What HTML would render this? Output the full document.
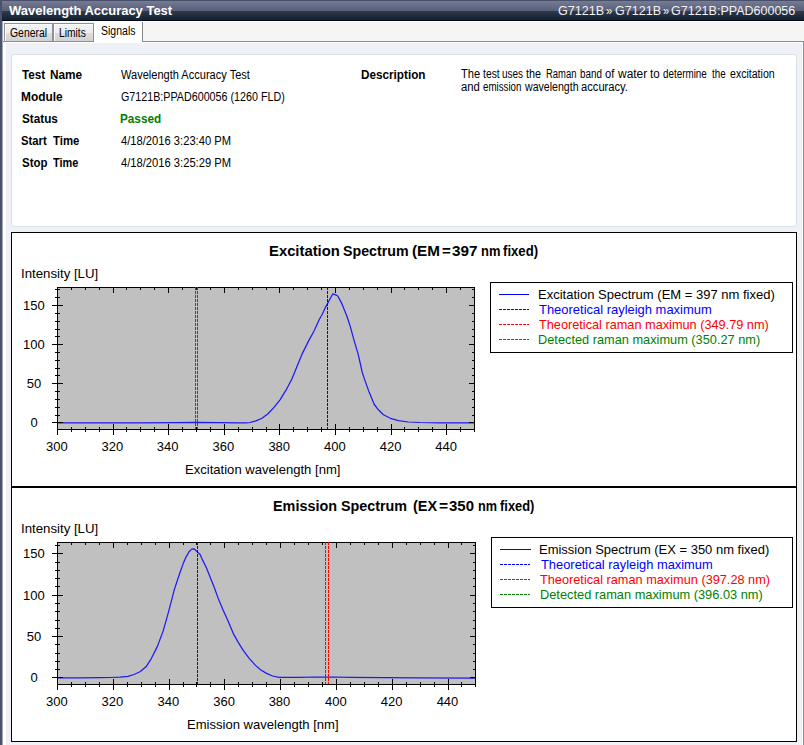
<!DOCTYPE html>
<html lang="en">
<head>
<meta charset="utf-8">
<title>Wavelength Accuracy Test</title>
<style>
html,body{margin:0;padding:0;}
body{width:804px;height:745px;position:relative;overflow:hidden;background:#fff;font-family:"Liberation Sans",sans-serif;font-size:11px;color:#000;}
.t{position:absolute;white-space:nowrap;display:inline-block;transform-origin:0 0;}
.hdr{position:absolute;left:0;top:0;width:804px;height:21px;background:linear-gradient(to bottom,#475068 0,#475068 1px,#757b93 1px,#595e79 11px,#2f3a4c 11px,#14202f 20px,#020c1a 20px,#020c1a 21px);}
.lb{position:absolute;left:0;top:0;width:2px;height:745px;background:#4a516b;}
.lb2{position:absolute;left:2px;top:21px;width:1px;height:724px;background:#a6a9b6;}
.strip{position:absolute;left:2px;top:22px;width:802px;height:19px;background:#f5f5f5;}
.page{position:absolute;left:2px;top:41px;width:800px;height:710px;border:1px solid #8b8d99;border-left-color:#fff;background:#f0f1f6;box-shadow:inset 0 0 0 1px #fff, inset 2px 0 0 1px #fff;}
.tab{position:absolute;top:23px;height:18px;border:1px solid #8e909b;border-bottom:none;background:linear-gradient(to bottom,#f3f3f3 0,#ececec 9px,#dedede 9px,#d2d2d2 17px);box-shadow:inset 1px 1px 0 #fbfbfb;box-sizing:border-box;}
.tabsel{position:absolute;left:94px;top:21px;width:49px;height:21px;background:#fff;}
.tabsel:after{content:'';position:absolute;right:0;top:1px;width:1px;height:20px;background:#85878f;}
.info{position:absolute;left:11px;top:54px;width:786px;height:173px;box-sizing:border-box;border:1px solid #d7e0e8;border-radius:3px;background:#fff;}
.chart{position:absolute;left:11px;width:786px;height:255px;box-sizing:border-box;border:1px solid #000;background:#fff;}
.plot{position:absolute;left:0;top:0;display:block;}
</style>
</head>
<body>
<div class="hdr"></div>
<div class="strip"></div>
<div class="page"></div>
<div class="tab" style="left:4px;width:49px;"></div>
<div class="tab" style="left:53px;width:41px;"></div>
<div class="tabsel"></div>
<div class="lb"></div><div class="lb2"></div>
<div class="info"></div>
<div class="chart" style="top:232px;"><svg class="plot" width="784" height="253" viewBox="12 233 784 253">
<rect x="57" y="287" width="418" height="143" fill="#c0c0c0"/>
<polyline points="57.0,422.9 140.0,422.9 175.0,422.7 196.0,422.4 220.0,422.6 238.0,422.8 246.0,422.8 250.0,422.5 256.0,420.9 262.0,418.2 268.0,413.8 274.0,407.4 280.0,399.8 286.0,390.2 292.0,378.8 297.3,365.7 302.3,353.6 308.4,341.4 314.4,330.3 319.4,319.3 322.4,314.0 325.5,307.2 327.5,303.6 330.5,298.0 332.9,293.8 335.2,294.6 337.8,296.0 341.8,303.6 346.9,316.2 350.2,326.2 353.2,337.3 358.2,354.4 362.3,372.5 364.3,378.6 369.3,392.6 374.3,404.5 378.4,409.8 383.4,414.8 390.4,418.3 398.5,420.6 408.5,422.0 420.0,422.5 440.0,422.8 474.0,422.9" fill="none" stroke="#1c1cf2" stroke-width="1.25" stroke-linejoin="round"/>
<g shape-rendering="crispEdges">
<path d="M57 287.5H475M57 429.5H475M57.5 287V430M474.5 287V432M57.5 424V435M57.5 287V293M71.5 427V432M71.5 287V290M85.5 427V432M85.5 287V290M99.5 427V432M99.5 287V290M113.5 424V435M113.5 287V293M126.5 427V432M126.5 287V290M140.5 427V432M140.5 287V290M154.5 427V432M154.5 287V290M168.5 424V435M168.5 287V293M182.5 427V432M182.5 287V290M196.5 427V432M196.5 287V290M210.5 427V432M210.5 287V290M224.5 424V435M224.5 287V293M238.5 427V432M238.5 287V290M252.5 427V432M252.5 287V290M266.5 427V432M266.5 287V290M279.5 424V435M279.5 287V293M293.5 427V432M293.5 287V290M307.5 427V432M307.5 287V290M321.5 427V432M321.5 287V290M335.5 424V435M335.5 287V293M349.5 427V432M349.5 287V290M363.5 427V432M363.5 287V290M377.5 427V432M377.5 287V290M391.5 424V435M391.5 287V293M404.5 427V432M404.5 287V290M418.5 427V432M418.5 287V290M432.5 427V432M432.5 287V290M446.5 424V435M446.5 287V293M460.5 427V432M460.5 287V290M52 422.5H63M469 422.5H475M55 415.5H60M472 415.5H475M55 407.5H60M472 407.5H475M55 399.5H60M472 399.5H475M55 391.5H60M472 391.5H475M52 383.5H63M469 383.5H475M55 375.5H60M472 375.5H475M55 368.5H60M472 368.5H475M55 360.5H60M472 360.5H475M55 352.5H60M472 352.5H475M52 344.5H63M469 344.5H475M55 336.5H60M472 336.5H475M55 329.5H60M472 329.5H475M55 321.5H60M472 321.5H475M55 313.5H60M472 313.5H475M52 305.5H63M469 305.5H475M55 297.5H60M472 297.5H475M55 289.5H60M472 289.5H475" stroke="#000" stroke-width="1" fill="none"/>
<line x1="327.5" y1="287" x2="327.5" y2="429" stroke="#0000ff" stroke-width="1" stroke-dasharray="3 1"/>
<line x1="195.5" y1="287" x2="195.5" y2="429" stroke="#ff0000" stroke-width="1" stroke-dasharray="3 1"/>
<line x1="197.5" y1="287" x2="197.5" y2="429" stroke="#008000" stroke-width="1" stroke-dasharray="3 1"/>
<rect x="490.5" y="282.5" width="302" height="70" fill="#fff" stroke="#000"/>
<line x1="499" y1="294.5" x2="529" y2="294.5" stroke="#0000ff"/>
<line x1="499" y1="309.5" x2="529" y2="309.5" stroke="#0000ff" stroke-dasharray="3 1"/>
<line x1="499" y1="324.5" x2="529" y2="324.5" stroke="#ff0000" stroke-dasharray="3 1"/>
<line x1="499" y1="339.5" x2="529" y2="339.5" stroke="#008000" stroke-dasharray="3 1"/>
</g>
</svg></div>
<div class="chart" style="top:487px;"><svg class="plot" width="784" height="253" viewBox="12 488 784 253">
<rect x="57" y="542" width="419" height="143" fill="#c0c0c0"/>
<polyline points="57.0,677.9 80.0,677.8 100.0,677.6 110.0,677.5 120.0,677.2 128.0,676.3 134.0,674.5 140.0,671.8 146.0,666.8 151.2,658.8 157.3,646.6 163.3,630.6 168.4,612.4 174.4,589.4 179.4,574.3 183.2,563.6 186.0,557.1 189.1,551.7 191.7,549.1 194.3,548.9 197.1,551.7 200.1,554.5 202.1,559.1 206.2,567.2 210.2,577.2 214.2,587.3 218.2,598.4 223.3,610.4 228.3,621.5 233.3,633.6 238.4,642.6 243.4,650.7 249.4,658.7 255.5,665.4 260.5,669.8 266.5,673.4 272.6,676.0 279.0,677.3 300.0,677.4 315.0,677.0 335.0,677.0 350.0,677.4 385.0,677.7 420.0,677.9 475.0,678.1" fill="none" stroke="#1c1cf2" stroke-width="1.25" stroke-linejoin="round"/>
<g shape-rendering="crispEdges">
<path d="M57 542.5H476M57 684.5H476M57.5 542V685M475.5 542V687M57.5 679V690M57.5 542V548M71.5 682V687M71.5 542V545M85.5 682V687M85.5 542V545M99.5 682V687M99.5 542V545M113.5 679V690M113.5 542V548M127.5 682V687M127.5 542V545M141.5 682V687M141.5 542V545M155.5 682V687M155.5 542V545M169.5 679V690M169.5 542V548M183.5 682V687M183.5 542V545M196.5 682V687M196.5 542V545M210.5 682V687M210.5 542V545M224.5 679V690M224.5 542V548M238.5 682V687M238.5 542V545M252.5 682V687M252.5 542V545M266.5 682V687M266.5 542V545M280.5 679V690M280.5 542V548M294.5 682V687M294.5 542V545M308.5 682V687M308.5 542V545M322.5 682V687M322.5 542V545M336.5 679V690M336.5 542V548M350.5 682V687M350.5 542V545M364.5 682V687M364.5 542V545M378.5 682V687M378.5 542V545M392.5 679V690M392.5 542V548M406.5 682V687M406.5 542V545M420.5 682V687M420.5 542V545M434.5 682V687M434.5 542V545M448.5 679V690M448.5 542V548M461.5 682V687M461.5 542V545M52 677.5H63M470 677.5H476M55 669.5H60M473 669.5H476M55 661.5H60M473 661.5H476M55 653.5H60M473 653.5H476M55 644.5H60M473 644.5H476M52 636.5H63M470 636.5H476M55 628.5H60M473 628.5H476M55 620.5H60M473 620.5H476M55 611.5H60M473 611.5H476M55 603.5H60M473 603.5H476M52 595.5H63M470 595.5H476M55 586.5H60M473 586.5H476M55 578.5H60M473 578.5H476M55 570.5H60M473 570.5H476M55 562.5H60M473 562.5H476M52 553.5H63M470 553.5H476M55 545.5H60M473 545.5H476" stroke="#000" stroke-width="1" fill="none"/>
<line x1="197.5" y1="542" x2="197.5" y2="684" stroke="#0000ff" stroke-width="1" stroke-dasharray="3 1"/>
<line x1="328.5" y1="542" x2="328.5" y2="684" stroke="#ff0000" stroke-width="1" stroke-dasharray="3 1"/>
<line x1="325.5" y1="542" x2="325.5" y2="684" stroke="#008000" stroke-width="1" stroke-dasharray="3 1"/>
<rect x="491.5" y="537.5" width="301" height="70" fill="#fff" stroke="#000"/>
<line x1="500" y1="549.5" x2="531" y2="549.5" stroke="#0000ff"/>
<line x1="500" y1="564.5" x2="530" y2="564.5" stroke="#0000ff" stroke-dasharray="3 1"/>
<line x1="500" y1="579.5" x2="530" y2="579.5" stroke="#ff0000" stroke-dasharray="3 1"/>
<line x1="500" y1="594.5" x2="530" y2="594.5" stroke="#008000" stroke-dasharray="3 1"/>
</g>
</svg></div>
<span class="t" id="ttl" style="left:9.00px;top:4.00px;font-size:13px;line-height:13px;font-weight:bold;color:#ffffff;transform:scaleX(0.9977);">Wavelength Accuracy Test</span>
<span class="t" id="crumb0" style="left:557.65px;top:5.00px;font-size:12px;line-height:12px;color:#f2f2f2;transform:scaleX(1.0480);">G7121B</span>
<span class="t" id="crumb1" style="left:606.13px;top:5.00px;font-size:12px;line-height:12px;color:#f2f2f2;transform:scaleX(0.9422);">»</span>
<span class="t" id="crumb2" style="left:615.20px;top:5.00px;font-size:12px;line-height:12px;color:#f2f2f2;transform:scaleX(1.0456);">G7121B</span>
<span class="t" id="crumb3" style="left:662.84px;top:5.00px;font-size:12px;line-height:12px;color:#f2f2f2;transform:scaleX(0.9244);">»</span>
<span class="t" id="crumb4" style="left:671.05px;top:5.00px;font-size:12px;line-height:12px;color:#f2f2f2;transform:scaleX(1.0424);">G7121B:PPAD600056</span>
<span class="t" id="tab1" style="left:10.06px;top:27.00px;font-size:12px;line-height:12px;transform:scaleX(0.8679);">General</span>
<span class="t" id="tab2" style="left:58.75px;top:27.00px;font-size:12px;line-height:12px;transform:scaleX(0.8536);">Limits</span>
<span class="t" id="tab3" style="left:100.65px;top:25.00px;font-size:12px;line-height:12px;transform:scaleX(0.8758);">Signals</span>
<span class="t" id="lab0_0" style="left:21.88px;top:69.00px;font-size:12px;line-height:12px;font-weight:bold;transform:scaleX(0.9745);">Test</span>
<span class="t" id="lab0_1" style="left:50.06px;top:69.00px;font-size:12px;line-height:12px;font-weight:bold;transform:scaleX(0.9841);">Name</span>
<span class="t" id="val0" style="left:120.88px;top:69.00px;font-size:12px;line-height:12px;transform:scaleX(0.9201);">Wavelength Accuracy Test</span>
<span class="t" id="lab1" style="left:21.26px;top:91.00px;font-size:12px;line-height:12px;font-weight:bold;transform:scaleX(0.9908);">Module</span>
<span class="t" id="val1" style="left:121.19px;top:91.00px;font-size:12px;line-height:12px;transform:scaleX(0.8935);">G7121B:PPAD600056 (1260 FLD)</span>
<span class="t" id="lab2" style="left:21.63px;top:113.00px;font-size:12px;line-height:12px;font-weight:bold;transform:scaleX(0.9790);">Status</span>
<span class="t" id="val2" style="left:120.07px;top:113.00px;font-size:12px;line-height:12px;font-weight:bold;color:#008000;transform:scaleX(0.9778);">Passed</span>
<span class="t" id="lab3_0" style="left:21.35px;top:135.00px;font-size:12px;line-height:12px;font-weight:bold;transform:scaleX(0.9377);">Start</span>
<span class="t" id="lab3_1" style="left:52.88px;top:135.00px;font-size:12px;line-height:12px;font-weight:bold;transform:scaleX(0.9468);">Time</span>
<span class="t" id="val3" style="left:120.82px;top:135.00px;font-size:12px;line-height:12px;transform:scaleX(0.9318);">4/18/2016 3:23:40 PM</span>
<span class="t" id="lab4_0" style="left:21.84px;top:157.00px;font-size:12px;line-height:12px;font-weight:bold;transform:scaleX(0.9553);">Stop</span>
<span class="t" id="lab4_1" style="left:52.89px;top:157.00px;font-size:12px;line-height:12px;font-weight:bold;transform:scaleX(0.9101);">Time</span>
<span class="t" id="val4" style="left:120.82px;top:157.00px;font-size:12px;line-height:12px;transform:scaleX(0.9318);">4/18/2016 3:25:29 PM</span>
<span class="t" id="dlab" style="left:361.27px;top:69.00px;font-size:12px;line-height:12px;font-weight:bold;transform:scaleX(0.9767);">Description</span>
<span class="t" id="d1_0" style="left:460.97px;top:68.00px;font-size:12px;line-height:12px;transform:scaleX(0.9258);">The</span>
<span class="t" id="d1_1" style="left:482.89px;top:68.00px;font-size:12px;line-height:12px;transform:scaleX(0.8627);">test</span>
<span class="t" id="d1_2" style="left:501.98px;top:68.00px;font-size:12px;line-height:12px;transform:scaleX(0.8332);">uses</span>
<span class="t" id="d1_3" style="left:526.19px;top:68.00px;font-size:12px;line-height:12px;transform:scaleX(0.9000);">the</span>
<span class="t" id="d1_4" style="left:546.01px;top:68.00px;font-size:12px;line-height:12px;transform:scaleX(0.7864);">Raman</span>
<span class="t" id="d1_5" style="left:580.39px;top:68.00px;font-size:12px;line-height:12px;transform:scaleX(0.8199);">band</span>
<span class="t" id="d1_6" style="left:605.23px;top:68.00px;font-size:12px;line-height:12px;transform:scaleX(0.9368);">of</span>
<span class="t" id="d1_7" style="left:618.00px;top:68.00px;font-size:12px;line-height:12px;transform:scaleX(0.9957);">water</span>
<span class="t" id="d1_8" style="left:650.28px;top:68.00px;font-size:12px;line-height:12px;transform:scaleX(0.9707);">to</span>
<span class="t" id="d1_9" style="left:663.09px;top:68.00px;font-size:12px;line-height:12px;transform:scaleX(0.8210);">determine</span>
<span class="t" id="d1_10" style="left:712.20px;top:68.00px;font-size:12px;line-height:12px;transform:scaleX(0.8125);">the</span>
<span class="t" id="d1_11" style="left:729.76px;top:68.00px;font-size:12px;line-height:12px;transform:scaleX(0.8810);">excitation</span>
<span class="t" id="d2_0" style="left:460.73px;top:81.00px;font-size:12px;line-height:12px;transform:scaleX(0.9440);">and</span>
<span class="t" id="d2_1" style="left:482.59px;top:81.00px;font-size:12px;line-height:12px;transform:scaleX(0.8108);">emission</span>
<span class="t" id="d2_2" style="left:524.80px;top:81.00px;font-size:12px;line-height:12px;transform:scaleX(0.8818);">wavelength</span>
<span class="t" id="d2_3" style="left:581.48px;top:81.00px;font-size:12px;line-height:12px;transform:scaleX(0.9309);">accuracy.</span>
<span class="t" id="ct0_0" style="left:268.94px;top:244.00px;font-size:14px;line-height:14px;font-weight:bold;transform:scaleX(1.0585);">Excitation</span>
<span class="t" id="ct0_1" style="left:343.12px;top:244.00px;font-size:14px;line-height:14px;font-weight:bold;transform:scaleX(1.0146);">Spectrum</span>
<span class="t" id="ct0_2" style="left:411.78px;top:244.00px;font-size:14px;line-height:14px;font-weight:bold;transform:scaleX(1.0875);">(EM</span>
<span class="t" id="ct0_3" style="left:441.93px;top:244.00px;font-size:14px;line-height:14px;font-weight:bold;transform:scaleX(1.0714);">=</span>
<span class="t" id="ct0_4" style="left:451.99px;top:244.00px;font-size:14px;line-height:14px;font-weight:bold;transform:scaleX(1.0905);">397</span>
<span class="t" id="ct0_5" style="left:480.99px;top:244.00px;font-size:14px;line-height:14px;font-weight:bold;transform:scaleX(0.9247);">nm</span>
<span class="t" id="ct0_6" style="left:503.46px;top:244.00px;font-size:14px;line-height:14px;font-weight:bold;transform:scaleX(0.9402);">fixed)</span>
<span class="t" id="yl0" style="left:20.78px;top:267.00px;font-size:13px;line-height:13px;transform:scaleX(1.0173);">Intensity [LU]</span>
<span class="t" id="xl0" style="left:185.17px;top:463.00px;font-size:13px;line-height:13px;transform:scaleX(1.0051);">Excitation wavelength [nm]</span>
<span class="t" id="xt0_300" style="left:45.99px;top:440.00px;font-size:13px;line-height:13px;">300</span>
<span class="t" id="xt0_320" style="left:101.59px;top:440.00px;font-size:13px;line-height:13px;">320</span>
<span class="t" id="xt0_340" style="left:156.69px;top:440.00px;font-size:13px;line-height:13px;">340</span>
<span class="t" id="xt0_360" style="left:212.59px;top:440.00px;font-size:13px;line-height:13px;">360</span>
<span class="t" id="xt0_380" style="left:268.39px;top:440.00px;font-size:13px;line-height:13px;">380</span>
<span class="t" id="xt0_400" style="left:324.11px;top:440.00px;font-size:13px;line-height:13px;">400</span>
<span class="t" id="xt0_420" style="left:379.71px;top:440.00px;font-size:13px;line-height:13px;">420</span>
<span class="t" id="xt0_440" style="left:435.31px;top:440.00px;font-size:13px;line-height:13px;">440</span>
<span class="t" id="yt0_0" style="left:30.38px;top:416.00px;font-size:13px;line-height:13px;">0</span>
<span class="t" id="yt0_50" style="left:26.81px;top:377.00px;font-size:13px;line-height:13px;">50</span>
<span class="t" id="yt0_100" style="left:22.94px;top:338.00px;font-size:13px;line-height:13px;">100</span>
<span class="t" id="yt0_150" style="left:22.94px;top:299.00px;font-size:13px;line-height:13px;">150</span>
<span class="t" id="lg0_0" style="left:538.17px;top:288.00px;font-size:13px;line-height:13px;transform:scaleX(1.0007);">Excitation Spectrum (EM = 397 nm fixed)</span>
<span class="t" id="lg0_1" style="left:538.65px;top:303.00px;font-size:13px;line-height:13px;color:#0000ff;transform:scaleX(0.9962);">Theoretical rayleigh maximum</span>
<span class="t" id="lg0_2" style="left:538.66px;top:318.00px;font-size:13px;line-height:13px;color:#ff0000;transform:scaleX(0.9784);">Theoretical raman maximun (349.79 nm)</span>
<span class="t" id="lg0_3" style="left:538.19px;top:333.00px;font-size:13px;line-height:13px;color:#008000;transform:scaleX(0.9828);">Detected raman maximum (350.27 nm)</span>
<span class="t" id="ct1_0" style="left:273.37px;top:499.00px;font-size:14px;line-height:14px;font-weight:bold;transform:scaleX(1.0286);">Emission</span>
<span class="t" id="ct1_1" style="left:340.62px;top:499.00px;font-size:14px;line-height:14px;font-weight:bold;transform:scaleX(1.0225);">Spectrum</span>
<span class="t" id="ct1_2" style="left:412.98px;top:499.00px;font-size:14px;line-height:14px;font-weight:bold;transform:scaleX(1.0324);">(EX</span>
<span class="t" id="ct1_3" style="left:438.50px;top:499.00px;font-size:14px;line-height:14px;font-weight:bold;transform:scaleX(1.1143);">=</span>
<span class="t" id="ct1_4" style="left:449.30px;top:499.00px;font-size:14px;line-height:14px;font-weight:bold;transform:scaleX(1.0682);">350</span>
<span class="t" id="ct1_5" style="left:477.91px;top:499.00px;font-size:14px;line-height:14px;font-weight:bold;transform:scaleX(0.9039);">nm</span>
<span class="t" id="ct1_6" style="left:500.37px;top:499.00px;font-size:14px;line-height:14px;font-weight:bold;transform:scaleX(0.9210);">fixed)</span>
<span class="t" id="yl1" style="left:20.78px;top:522.00px;font-size:13px;line-height:13px;transform:scaleX(1.0173);">Intensity [LU]</span>
<span class="t" id="xl1" style="left:187.07px;top:718.00px;font-size:13px;line-height:13px;transform:scaleX(1.0040);">Emission wavelength [nm]</span>
<span class="t" id="xt1_300" style="left:45.99px;top:695.00px;font-size:13px;line-height:13px;">300</span>
<span class="t" id="xt1_320" style="left:101.58px;top:695.00px;font-size:13px;line-height:13px;">320</span>
<span class="t" id="xt1_340" style="left:157.57px;top:695.00px;font-size:13px;line-height:13px;">340</span>
<span class="t" id="xt1_360" style="left:213.36px;top:695.00px;font-size:13px;line-height:13px;">360</span>
<span class="t" id="xt1_380" style="left:268.65px;top:695.00px;font-size:13px;line-height:13px;">380</span>
<span class="t" id="xt1_400" style="left:325.06px;top:695.00px;font-size:13px;line-height:13px;">400</span>
<span class="t" id="xt1_420" style="left:380.85px;top:695.00px;font-size:13px;line-height:13px;">420</span>
<span class="t" id="xt1_440" style="left:436.64px;top:695.00px;font-size:13px;line-height:13px;">440</span>
<span class="t" id="yt1_0" style="left:30.38px;top:671.00px;font-size:13px;line-height:13px;">0</span>
<span class="t" id="yt1_50" style="left:26.81px;top:630.00px;font-size:13px;line-height:13px;">50</span>
<span class="t" id="yt1_100" style="left:22.94px;top:589.00px;font-size:13px;line-height:13px;">100</span>
<span class="t" id="yt1_150" style="left:22.94px;top:547.00px;font-size:13px;line-height:13px;">150</span>
<span class="t" id="lg1_0" style="left:539.38px;top:543.00px;font-size:13px;line-height:13px;transform:scaleX(0.9975);">Emission Spectrum (EX = 350 nm fixed)</span>
<span class="t" id="lg1_1" style="left:540.55px;top:558.00px;font-size:13px;line-height:13px;color:#0000ff;transform:scaleX(0.9904);">Theoretical rayleigh maximum</span>
<span class="t" id="lg1_2" style="left:539.56px;top:573.00px;font-size:13px;line-height:13px;color:#ff0000;transform:scaleX(0.9797);">Theoretical raman maximun (397.28 nm)</span>
<span class="t" id="lg1_3" style="left:539.99px;top:588.00px;font-size:13px;line-height:13px;color:#008000;transform:scaleX(0.9851);">Detected raman maximum (396.03 nm)</span>
</body>
</html>
